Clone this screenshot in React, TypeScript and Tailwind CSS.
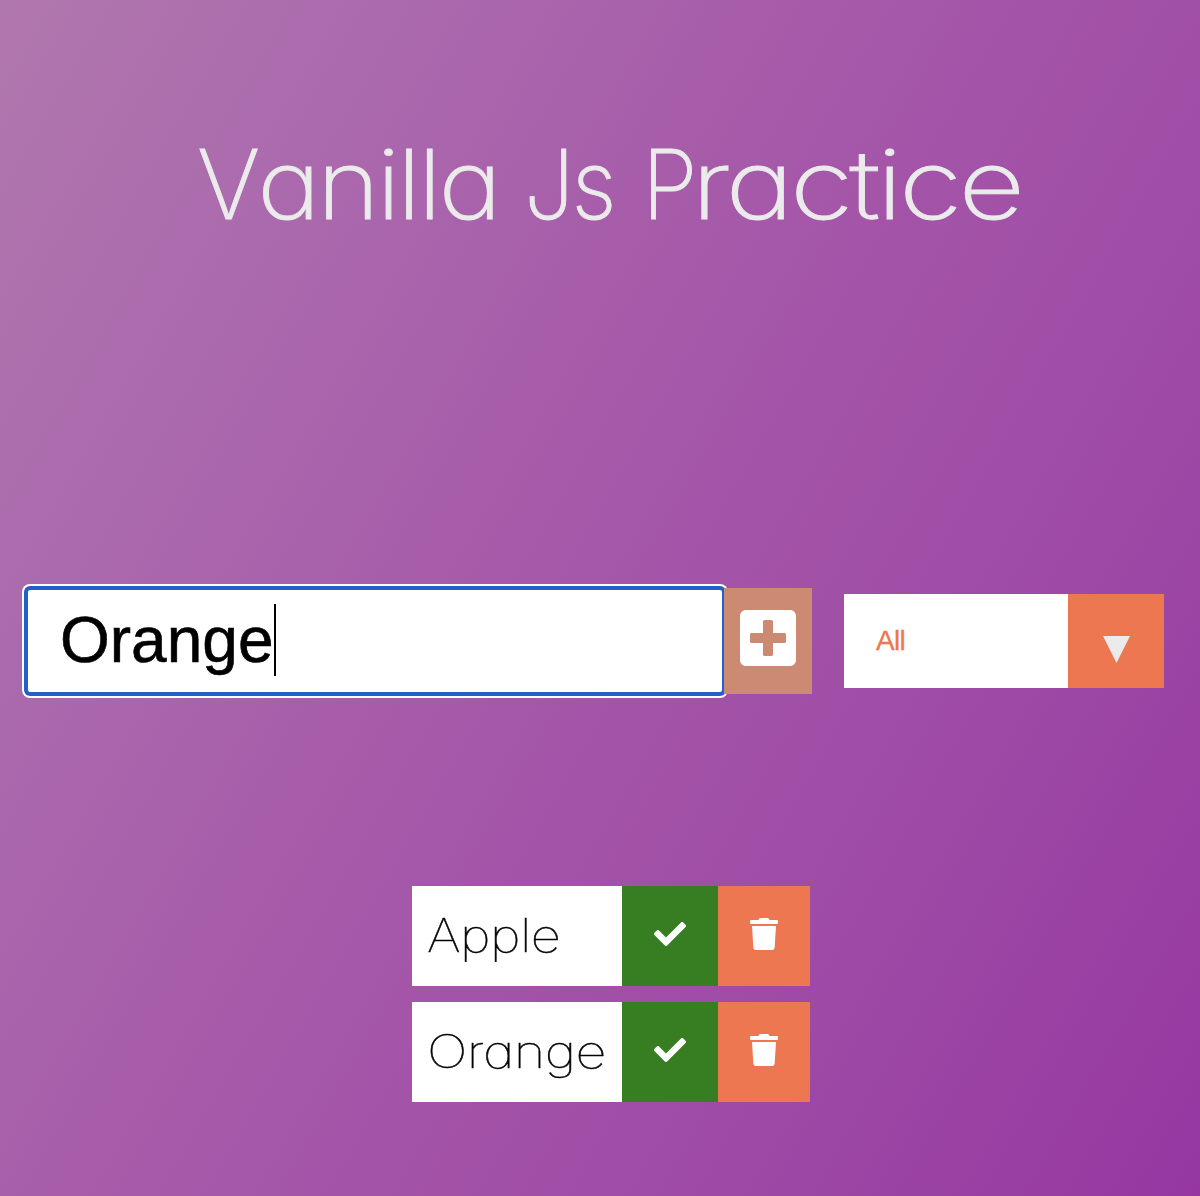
import { FaCheck, FaPlusSquare, FaTrash } from "react-icons/fa";

const todos = [
  { name: "Apple", style: "scale-x-[1.142]" },
  { name: "Orange", style: "scale-x-[1.175]" },
];

export default function App() {
  return (
    <div className="flex h-[1196px] w-[1200px] flex-col overflow-hidden bg-[linear-gradient(120deg,#b077ad_0%,#ab69ad_22%,#a455a8_52%,#9e4ba6_72%,#9637a1_100%)] font-['Inter',sans-serif] [font-feature-settings:'cv11']">
      <header className="flex h-[588px] shrink-0 pl-[197px] pt-[126px]">
        <h1 className="flex h-[116px] text-[96px] font-extralight leading-[116px] tracking-[-3px] whitespace-nowrap text-[#ebebeb] [-webkit-text-stroke:0.9px_#ebebeb]">
          <span className="w-[327px] origin-left scale-x-[1.114]">
            <span className="mr-[-6px] inline-block origin-left scale-x-90">V</span>anilla
          </span>
          <span className="w-[118px] origin-left scale-x-[0.93]">Js</span>
          <span className="origin-left scale-x-[1.2]">
            <span className="mr-[-15px] inline-block origin-left scale-x-[0.78]">P</span>ractice
          </span>
        </h1>
      </header>

      <form className="flex h-[106px] shrink-0 items-center pl-[26px] font-['Liberation_Sans',sans-serif]">
        <div className="flex h-[106px] w-[698px] items-center rounded-[4px] border-2 border-[#2460c8] bg-white pb-0.5 pl-8 shadow-[0_0_0_2px_#2460c8,0_0_0_4px_white]">
          <span className="text-[64px] leading-[72px] text-black [-webkit-text-stroke:0.6px_black]">Orange</span>
          <span className="ml-px h-[72px] w-[2px] bg-black" />
        </div>
        <button type="button" className="relative flex h-[106px] w-[88px] items-start justify-center bg-[#cc8a73] pt-[18px] text-white">
          <FaPlusSquare className="h-16 w-14" />
        </button>
        <div className="ml-8 flex h-[94px] w-80">
          <div className="flex w-56 items-center bg-white pl-8 text-[28px] leading-8 tracking-[-0.7px] text-[#ed7751] [-webkit-text-stroke:0.3px_#ed7751]">All</div>
          <div className="flex w-24 justify-center bg-[#ed7751] pt-[42px]">
            <svg className="h-[27px] w-[27px]" viewBox="0 0 27 27" fill="#ebebeb">
              <path d="M0 0H27L13.5 27Z" />
            </svg>
          </div>
        </div>
      </form>

      <ul className="mt-[192px] ml-[412px] flex w-[398px] flex-col gap-4">
        {todos.map((todo) => (
          <li key={todo.name} className="flex h-[100px]">
            <div className="w-[210px] bg-white pl-[15px] text-[46px] leading-[99px] font-thin tracking-[-0.5px] text-black [-webkit-text-stroke:0.5px_black]">
              <span className={`block w-fit origin-left ${todo.style}`}>{todo.name}</span>
            </div>
            <button type="button" className="flex w-24 justify-center bg-[#377e22] pt-8 text-white">
              <FaCheck className="h-8 w-8" />
            </button>
            <button type="button" className="flex w-[92px] justify-center bg-[#ed7751] pt-8 text-white">
              <FaTrash className="h-8 w-7" />
            </button>
          </li>
        ))}
      </ul>
    </div>
  );
}
